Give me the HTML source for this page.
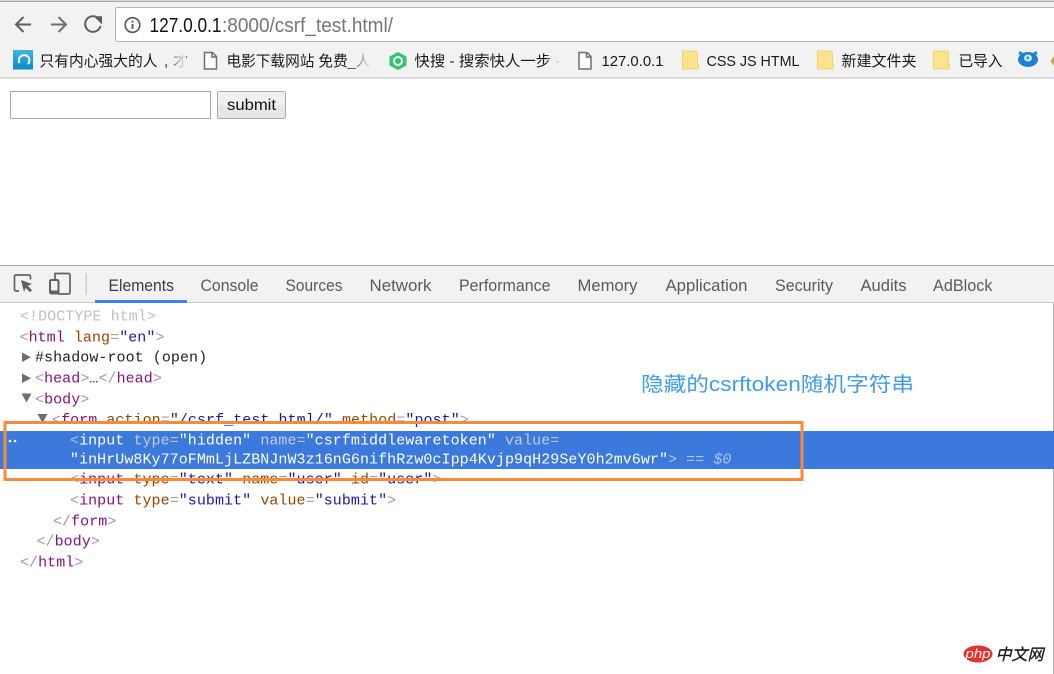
<!DOCTYPE html>
<html lang="zh">
<head>
<meta charset="utf-8">
<title>csrf_test</title>
<style>
html,body{margin:0;padding:0;background:#fff;width:1054px;height:674px;overflow:hidden}
svg{display:block;position:absolute;left:0;top:0}
.s{font-family:"Liberation Sans","Noto Sans CJK SC",sans-serif}
.b{font-family:"Liberation Sans","Noto Sans CJK SC",sans-serif;font-size:15px;fill:#1a1a1a}
.t{font-family:"Liberation Sans",sans-serif;font-size:16.5px;fill:#5a5a5a}
.m{font-family:"Liberation Mono",monospace;font-size:15px;letter-spacing:.06px;white-space:pre}
.br{fill:#a894a6}.tg{fill:#881280}.an{fill:#994500}.av{fill:#1a1aa6}.eq{fill:#a0a0a0}
.w{fill:#fff}.g{fill:#c3cbdc}.br2{fill:#b9c2d3}
</style>
</head>
<body>
<svg width="1054" height="674" viewBox="0 0 1054 674" xmlns="http://www.w3.org/2000/svg">
<defs>
<linearGradient id="fade" x1="0" x2="1" y1="0" y2="0"><stop offset="0" stop-color="#f2f2f2" stop-opacity="0"/><stop offset="1" stop-color="#f2f2f2"/></linearGradient>
<linearGradient id="blue" x1="0" x2="0" y1="0" y2="1"><stop offset="0" stop-color="#3fb2ea"/><stop offset="1" stop-color="#0a8bc8"/></linearGradient>
</defs>

<!-- browser chrome -->
<rect x="0" y="0" width="1054" height="78" fill="#f2f2f2"/>
<rect x="0" y="0" width="1054" height="1" fill="#d8d8d8"/>
<rect x="0" y="1" width="1054" height="1" fill="#a8a8a8"/>
<rect x="0" y="77.5" width="1054" height="1" fill="#bdbdbd"/>
<rect x="115.5" y="7.5" width="945" height="34" rx="2" fill="#fff" stroke="#b4b4b4"/>

<!-- nav icons -->
<g fill="none" stroke="#5f5f5f" stroke-width="2">
<path d="M31 24.500H16M23.500 17l-7.500 7.500 7.500 7.500"/>
<path d="M51 24.500h15M58.500 17l7.500 7.500-7.500 7.500" opacity=".9"/>
<path d="M100.500 26a7.800 7.800 0 1 1-1.800-7.200"/>
</g>
<path d="M93.500 16.200h8.500v8.200z" fill="#5f5f5f"/>
<circle cx="132.500" cy="25" r="7.300" fill="none" stroke="#555" stroke-width="1.600"/>
<rect x="131.600" y="24" width="1.800" height="5" fill="#555"/><rect x="131.600" y="20.800" width="1.800" height="1.800" fill="#555"/>

<text class="s" x="149.500" y="32" font-size="20" fill="#111" textLength="72" lengthAdjust="spacingAndGlyphs">127.0.0.1</text>
<text class="s" x="222" y="32" font-size="20" fill="#777" textLength="171" lengthAdjust="spacingAndGlyphs">:8000/csrf_test.html/</text>

<!-- bookmarks -->
<rect x="13" y="50" width="20" height="19.500" fill="url(#blue)"/>
<path d="M19.500 63a5.300 5.300 0 1 1 8.500 1" fill="none" stroke="#fff" stroke-width="2"/>
<text class="b" x="39.500" y="66" textLength="118" lengthAdjust="spacingAndGlyphs">只有内心强大的人</text>
<text class="b" x="164" y="66">,</text>
<text class="b" x="173" y="66">才</text>
<rect x="165" y="48" width="21" height="24" fill="url(#fade)"/>

<path d="M204.500 52.500h8l4 4v12.500h-12zM212 52.500v4.500h4.500" fill="#fff" stroke="#6f6f6f" stroke-width="1.500"/>
<text class="b" x="226.500" y="66" textLength="144" lengthAdjust="spacingAndGlyphs">电影下载网站 免费_人</text>
<rect x="345" y="48" width="27" height="24" fill="url(#fade)"/>

<path d="M398 52l8.500 4.500v9L398 70l-8.500-4.500v-9z" fill="#2fc66d"/>
<circle cx="398" cy="61" r="4" fill="none" stroke="#fff" stroke-width="2"/>
<text class="b" x="414.500" y="66" textLength="146" lengthAdjust="spacingAndGlyphs">快搜 - 搜索快人一步 -</text>
<rect x="545" y="48" width="16" height="24" fill="url(#fade)"/>

<path d="M579 52.500h8l4 4v12.500h-12zM586.500 52.500v4.500h4.500" fill="#fff" stroke="#6f6f6f" stroke-width="1.500"/>
<text class="b" x="601.500" y="66" textLength="62" lengthAdjust="spacingAndGlyphs">127.0.0.1</text>

<g fill="#fde38d" stroke="#f5d270">
<path d="M682.500 51h13.500l1.500 1.500v12h1v3.500l-1 1h-15z"/>
<path d="M817.500 51h13.500l1.500 1.500v12h1v3.500l-1 1h-15z"/>
<path d="M933.500 51h13.500l1.500 1.500v12h1v3.500l-1 1h-15z"/>
</g>
<text class="b" x="706.500" y="66" textLength="93" lengthAdjust="spacingAndGlyphs">CSS JS HTML</text>
<text class="b" x="841.500" y="66" textLength="75" lengthAdjust="spacingAndGlyphs">新建文件夹</text>
<text class="b" x="958.500" y="66" textLength="44" lengthAdjust="spacingAndGlyphs">已导入</text>

<ellipse cx="1028" cy="59.500" rx="10" ry="7.500" fill="#1f7fd0"/>
<path d="M1018.500 55l1-4 4 2zM1037.500 55l-1-4-4 2z" fill="#1f7fd0"/>
<ellipse cx="1028" cy="58" rx="4" ry="3.500" fill="#cfe9fa"/>
<path d="M1026.800 56l2.800 2-2.800 2z" fill="#1f7fd0"/>
<path d="M1050.500 61l3.500-5v10z" fill="#d9a24a"/>

<!-- page -->
<rect x="10.500" y="91.500" width="200" height="27" fill="#fff" stroke="#a9a9a9"/>
<rect x="217.500" y="91.500" width="68" height="27" rx="2" fill="#e6e6e6" stroke="#a9a9a9"/>
<rect x="218" y="92" width="67" height="13" fill="#f0f0f0"/>
<text class="s" x="227" y="110" font-size="16" fill="#111" textLength="49" lengthAdjust="spacingAndGlyphs">submit</text>

<!-- devtools -->
<rect x="0" y="265" width="1054" height="1" fill="#a9a9a9"/>
<rect x="0" y="266" width="1054" height="36" fill="#f2f2f2"/>
<rect x="0" y="302" width="1054" height="1" fill="#cccccc"/>
<rect x="1053" y="303" width="1" height="371" fill="#b5b5b5"/>
<rect x="95" y="300" width="92" height="3" fill="#3b80ee"/>

<path d="M19 291h-3a1.500 1.500 0 0 1-1.500-1.500v-13a1.500 1.500 0 0 1 1.500-1.500h13a1.500 1.500 0 0 1 1.500 1.500v3" fill="none" stroke="#616161" stroke-width="1.700"/>
<path d="M21 280l11 4-4.200 1.800 4.200 4.400-2 2-4.300-4.400-1.700 4.200z" fill="#616161"/>
<path d="M55 280v-6.500h13.500a1.500 1.500 0 0 1 1.500 1.500v17.500a1.500 1.500 0 0 1-1.500 1.500H58" fill="none" stroke="#616161" stroke-width="1.700"/>
<rect x="50" y="280" width="8.500" height="13.500" rx="1.500" fill="none" stroke="#616161" stroke-width="2"/>
<rect x="50" y="290.500" width="8.500" height="3.500" fill="#616161"/>
<rect x="85.500" y="273" width="1.500" height="22" fill="#cfcfcf"/>

<text class="t" x="108.500" y="291" style="fill:#3c3c3c" textLength="65.500" lengthAdjust="spacingAndGlyphs">Elements</text>
<text class="t" x="200.500" y="291" textLength="58" lengthAdjust="spacingAndGlyphs">Console</text>
<text class="t" x="285.500" y="291" textLength="57" lengthAdjust="spacingAndGlyphs">Sources</text>
<text class="t" x="369.500" y="291" textLength="62" lengthAdjust="spacingAndGlyphs">Network</text>
<text class="t" x="459" y="291" textLength="91.500" lengthAdjust="spacingAndGlyphs">Performance</text>
<text class="t" x="577.500" y="291" textLength="60" lengthAdjust="spacingAndGlyphs">Memory</text>
<text class="t" x="665.500" y="291" textLength="82" lengthAdjust="spacingAndGlyphs">Application</text>
<text class="t" x="775" y="291" textLength="58" lengthAdjust="spacingAndGlyphs">Security</text>
<text class="t" x="860.500" y="291" textLength="46" lengthAdjust="spacingAndGlyphs">Audits</text>
<text class="t" x="933" y="291" textLength="59.500" lengthAdjust="spacingAndGlyphs">AdBlock</text>

<!-- DOM tree -->
<rect x="0" y="431" width="1054" height="38" fill="#3b79dc"/>
<circle cx="10" cy="441" r="1.300" fill="#fff"/><circle cx="15" cy="441" r="1.300" fill="#fff"/>

<text class="m" x="20" y="320.500" fill="#c0c0c0">&lt;!DOCTYPE html&gt;</text>
<text class="m" x="19.500" y="341.500"><tspan class="br">&lt;</tspan><tspan class="tg">html</tspan><tspan> </tspan><tspan class="an">lang</tspan><tspan class="eq">=</tspan><tspan class="av">"en"</tspan><tspan class="br">&gt;</tspan></text>
<path d="M22 352.500v9.500l9-4.750z" fill="#6e6e6e"/>
<text class="m" x="35" y="361.500" fill="#222">#shadow-root (open)</text>
<path d="M22 373.500v9.500l9-4.750z" fill="#6e6e6e"/>
<text class="m" x="35" y="382.500"><tspan class="br">&lt;</tspan><tspan class="tg">head</tspan><tspan class="br">&gt;</tspan><tspan fill="#333">…</tspan><tspan class="br">&lt;/</tspan><tspan class="tg">head</tspan><tspan class="br">&gt;</tspan></text>
<path d="M21.500 393.500h10l-5 9z" fill="#6e6e6e"/>
<text class="m" x="35" y="403.500"><tspan class="br">&lt;</tspan><tspan class="tg">body</tspan><tspan class="br">&gt;</tspan></text>
<path d="M37.500 414h10l-5 9z" fill="#6e6e6e"/>
<text class="m" x="52" y="424"><tspan class="br">&lt;</tspan><tspan class="tg">form</tspan><tspan> </tspan><tspan class="an">action</tspan><tspan class="eq">=</tspan><tspan class="av">"/csrf_test.html/"</tspan><tspan> </tspan><tspan class="an">method</tspan><tspan class="eq">=</tspan><tspan class="av">"post"</tspan><tspan class="br">&gt;</tspan></text>

<text class="m" x="70" y="444.500"><tspan class="br2">&lt;</tspan><tspan class="w">input</tspan><tspan> </tspan><tspan class="g">type</tspan><tspan class="br2">=</tspan><tspan class="w">"hidden"</tspan><tspan> </tspan><tspan class="g">name</tspan><tspan class="br2">=</tspan><tspan class="w">"csrfmiddlewaretoken"</tspan><tspan> </tspan><tspan class="g">value</tspan><tspan class="br2">=</tspan></text>
<text class="m" x="70" y="463.500"><tspan class="w">"inHrUw8Ky77oFMmLjLZBNJnW3z16nG6nifhRzw0cIpp4Kvjp9qH29SeY0h2mv6wr"</tspan><tspan class="br2">&gt;</tspan><tspan class="br2"> == </tspan><tspan fill="#a9c3ec" font-style="italic">$0</tspan></text>

<text class="m" x="70" y="483.500"><tspan class="br">&lt;</tspan><tspan class="tg">input</tspan><tspan> </tspan><tspan class="an">type</tspan><tspan class="eq">=</tspan><tspan class="av">"text"</tspan><tspan> </tspan><tspan class="an">name</tspan><tspan class="eq">=</tspan><tspan class="av">"user"</tspan><tspan> </tspan><tspan class="an">id</tspan><tspan class="eq">=</tspan><tspan class="av">"user"</tspan><tspan class="br">&gt;</tspan></text>
<text class="m" x="70" y="504.500"><tspan class="br">&lt;</tspan><tspan class="tg">input</tspan><tspan> </tspan><tspan class="an">type</tspan><tspan class="eq">=</tspan><tspan class="av">"submit"</tspan><tspan> </tspan><tspan class="an">value</tspan><tspan class="eq">=</tspan><tspan class="av">"submit"</tspan><tspan class="br">&gt;</tspan></text>
<text class="m" x="53" y="525.500"><tspan class="br">&lt;/</tspan><tspan class="tg">form</tspan><tspan class="br">&gt;</tspan></text>
<text class="m" x="36.500" y="545.500"><tspan class="br">&lt;/</tspan><tspan class="tg">body</tspan><tspan class="br">&gt;</tspan></text>
<text class="m" x="20" y="566.500"><tspan class="br">&lt;/</tspan><tspan class="tg">html</tspan><tspan class="br">&gt;</tspan></text>

<!-- annotation -->
<rect x="5" y="422.500" width="797" height="57" fill="none" stroke="#f98a3a" stroke-width="3"/>
<text class="s" x="641" y="391" font-size="20" fill="#3f9ce8" textLength="273" lengthAdjust="spacingAndGlyphs">隐藏的csrftoken随机字符串</text>

<!-- watermark -->
<ellipse cx="978" cy="654" rx="14.500" ry="8.500" fill="#e5322b"/>
<text class="s" x="965.500" y="658" font-size="12.500" font-style="italic" fill="#fff" textLength="25" lengthAdjust="spacingAndGlyphs">php</text>
<text class="s" x="995.500" y="660" font-size="16" font-weight="400" font-style="italic" fill="#1a1a1a" stroke="#1a1a1a" stroke-width=".3" textLength="48" lengthAdjust="spacingAndGlyphs">中文网</text>
</svg>
</body>
</html>
